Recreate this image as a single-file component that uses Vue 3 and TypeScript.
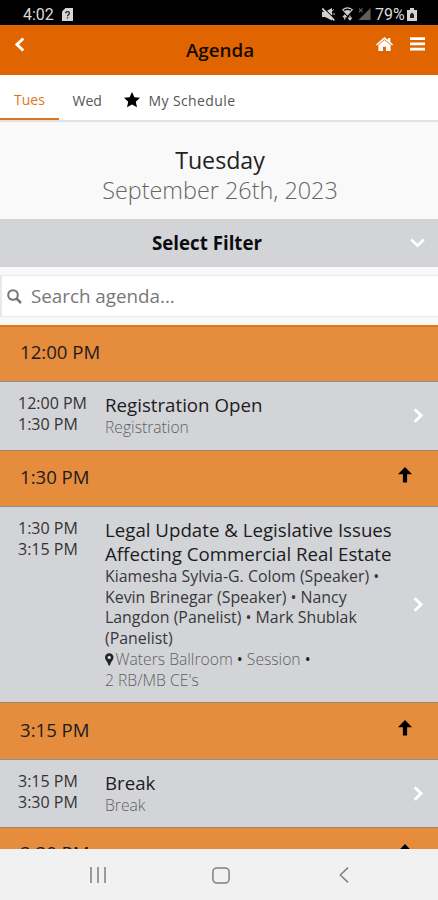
<script setup lang="ts">
interface Session {
  start: string
  end: string
  title: string[]
  speakers: string[]
  meta: string[]
  location?: string
  size: string
}

interface Slot {
  time: string
  jump: boolean
  size: string
  session?: Session
}

const slots: Slot[] = [
  {
    time: '12:00 PM',
    jump: false,
    size: 'bar-first',
    session: {
      start: '12:00 PM',
      end: '1:30 PM',
      title: ['Registration Open'],
      speakers: [],
      meta: ['Registration'],
      size: 'row-registration',
    },
  },
  {
    time: '1:30 PM',
    jump: true,
    size: 'bar-second',
    session: {
      start: '1:30 PM',
      end: '3:15 PM',
      title: ['Legal Update & Legislative Issues', 'Affecting Commercial Real Estate'],
      speakers: [
        'Kiamesha Sylvia-G. Colom (Speaker) •',
        'Kevin Brinegar (Speaker) • Nancy',
        'Langdon (Panelist) • Mark Shublak',
        '(Panelist)',
      ],
      location: 'Waters Ballroom',
      meta: ["2 RB/MB CE's"],
      size: 'row-legal',
    },
  },
  {
    time: '3:15 PM',
    jump: true,
    size: 'bar-third',
    session: {
      start: '3:15 PM',
      end: '3:30 PM',
      title: ['Break'],
      speakers: [],
      meta: ['Break'],
      size: 'row-break',
    },
  },
  { time: '3:30 PM', jump: true, size: 'bar-last' },
]
</script>

<template>
  <div class="phone">
    <div class="status">
      <span class="clock">4:02</span>
      <svg class="sim" viewBox="0 0 11 13"><path d="M3.5 0H11V13H0V3.5Z" fill="#d6d6d6" /><path d="M3.6 5.2C3.6 3 7.4 3 7.4 5.2C7.4 6.7 5.5 6.6 5.5 8.3M5.5 9.3V10.6" fill="none" stroke="#222" stroke-width="1.3" /></svg>
      <span class="grow"></span>
      <svg class="mute" viewBox="0 0 13 13"><path d="M0 3.8H3L10 0V12.5L3 9H0Z" fill="#cfcfcf" /><path d="M1.4 0L13 11.4" stroke="#000" stroke-width="1.2" /><path d="M.3 .5L12.3 12.3" stroke="#d8d8d8" stroke-width="1.7" /><path d="M10.5 6H13M10 3L12 1.5" stroke="#bbb" /></svg>
      <svg class="wifi" viewBox="0 0 12 14"><path d="M.7 2.2Q6-1.5 11.3 2.2L6 8Z" fill="none" stroke="#cfcfcf" stroke-width="1.2" /><path d="M2.6 3.8Q6 1.5 9.4 3.8L6 8Z" fill="#cfcfcf" /><path d="M3 13V8.5M1 10.5L3 8.3L5 10.5M8.7 8.5V13M6.7 11L8.7 13.2L10.7 11" fill="none" stroke="#cfcfcf" stroke-width="1.4" /></svg>
      <svg class="signal" viewBox="0 0 14 14"><path d="M13.5 .5V13.5H.5Z" fill="#5d5d5d" /><path d="M1 1L5 5M5 1L1 5" stroke="#666" stroke-width="1.1" /></svg>
      <span class="percent">79%</span>
      <svg class="battery" viewBox="0 0 10 13"><path d="M3 0H7V2H10V13H0V2H3Z" fill="#d4d4d4" /><path d="M3 10V6.5L5 4.5L7 6.5V10Z" fill="#222" /></svg>
    </div>

    <header class="header">
      <svg class="back" viewBox="0 0 11 15"><path d="M9.3 1.5L3 7.5L9.3 13.5" fill="none" stroke="#fff" stroke-width="3" /></svg>
      <h1 class="title">Agenda</h1>
      <svg class="home" viewBox="0 0 17 14"><path d="M8.5 0L12 3V1H14.3V5L17 7.4L16 8.6L8.5 2.2L1 8.6L0 7.4Z" fill="#fff" /><path d="M8.5 3L14.6 8.2V14H10V9.8H7V14H2.4V8.2Z" fill="#fff" /></svg>
      <svg class="menu" viewBox="0 0 15 14"><path d="M0 .2H15V3H0ZM0 5.5H15V8.3H0ZM0 10.8H15V13.6H0Z" fill="#fff" /></svg>
    </header>

    <nav class="tabs">
      <a class="tab active">Tues</a>
      <a class="tab wed">Wed</a>
      <a class="tab mine">
        <svg class="star" viewBox="0 0 24 24"><path d="M12 0L15.6 7.9L24 8.8L17.7 14.5L19.5 23L12 18.7L4.5 23L6.3 14.5L0 8.8L8.4 7.9Z" /></svg>
        <span>My Schedule</span>
      </a>
    </nav>

    <section class="date">
      <div class="day">Tuesday</div>
      <div class="full">September 26th, 2023</div>
    </section>

    <div class="filter">
      <span class="filter-label">Select Filter</span>
      <svg class="down" viewBox="0 0 15 10"><path d="M1.2 1.5L7.5 7.7L13.8 1.5" fill="none" stroke="#fff" stroke-width="2.7" /></svg>
    </div>

    <div class="search-area">
      <div class="search">
        <svg class="glass" viewBox="0 0 15 15"><circle cx="6" cy="6" r="4.8" fill="none" stroke="#777" stroke-width="2.1" /><path d="M9.5 9.5L14 14" stroke="#777" stroke-width="2.5" /></svg>
        <span class="placeholder">Search agenda...</span>
      </div>
    </div>

    <main class="list">
      <template v-for="slot in slots" :key="slot.time">
        <div class="bar" :class="slot.size">
          <span class="bar-time">{{ slot.time }}</span>
          <svg v-if="slot.jump" class="up" viewBox="0 0 14 16"><path d="M7 0L14 7.2H9.1V15.5H4.9V7.2H0Z" /></svg>
        </div>
        <div v-if="slot.session" class="row" :class="slot.session.size">
          <div class="times">
            <div>{{ slot.session.start }}</div>
            <div>{{ slot.session.end }}</div>
          </div>
          <div class="body">
            <div v-for="line in slot.session.title" :key="line" class="name">{{ line }}</div>
            <div v-for="line in slot.session.speakers" :key="line" class="speaker">{{ line }}</div>
            <div v-if="slot.session.location" class="meta place">
              <svg class="pin" viewBox="0 0 9 13"><path fill-rule="evenodd" d="M4.5 0A4.4 4.4 0 0 1 9 4.4C9 7 6 9 5.4 12.2Q4.5 13.6 3.6 12.2C3 9 0 7 0 4.4A4.4 4.4 0 0 1 4.5 0ZM4.5 2.6A1.8 1.8 0 1 0 4.5 6.2A1.8 1.8 0 1 0 4.5 2.6Z" fill="#222" /></svg>
              <span>{{ slot.session.location }} <b>•</b> Session <b>•</b></span>
            </div>
            <div v-for="line in slot.session.meta" :key="line" class="meta">{{ line }}</div>
          </div>
          <svg class="next" viewBox="0 0 11 15"><path d="M1.7 1.3L8 7.5L1.7 13.7" fill="none" stroke="#fff" stroke-width="2.9" /></svg>
        </div>
      </template>
    </main>

    <footer class="softkeys">
      <svg class="recents" viewBox="0 0 16 16"><path d="M1 0V16M8 0V16M15 0V16" stroke="#858585" stroke-width="1.6" /></svg>
      <svg class="homekey" viewBox="0 0 18 17"><rect x=".9" y=".9" width="16.2" height="15.2" rx="4" fill="none" stroke="#808080" stroke-width="1.5" /></svg>
      <svg class="backkey" viewBox="0 0 10 16"><path d="M9 .6L1.3 8L9 15.4" fill="none" stroke="#808080" stroke-width="1.5" /></svg>
    </footer>
  </div>
</template>

<style>
body {
  margin: 0;
}
</style>

<style scoped>
.phone {
  width: 438px;
  height: 900px;
  overflow: hidden;
  display: flex;
  flex-direction: column;
  background: #f9f9f9;
  font-family: 'Open Sans', 'Noto Sans', sans-serif;
  color: #1c1c1e;
  white-space: nowrap;
}
.phone svg {
  flex: none;
  display: block;
}
.phone > * {
  flex: none;
  box-sizing: border-box;
}
.status {
  height: 25px;
  background: #000;
  color: #dadada;
  display: flex;
  align-items: center;
  padding: 3px 21px 0 23px;
  font-family: Roboto, sans-serif;
}
.clock {
  font-size: 16px;
  width: 39px;
}
.sim {
  width: 11px;
  height: 13px;
}
.grow {
  flex: 1;
}
.mute {
  width: 13px;
  height: 13px;
  margin-right: 7px;
}
.wifi {
  width: 11px;
  height: 14px;
  margin-right: 5px;
}
.signal {
  width: 13px;
  height: 14px;
  margin-right: 4px;
}
.percent {
  font-size: 16px;
  width: 32px;
}
.battery {
  width: 10px;
  height: 13px;
}
.header {
  height: 50px;
  background: #e06500;
  display: flex;
  align-items: flex-start;
  padding: 12px 12px 0 14px;
}
.back {
  width: 11px;
  height: 15px;
}
.title {
  margin: 0;
  flex: 1;
  padding-left: 39px;
  text-align: center;
  font-size: 18.8px;
  line-height: 26px;
  font-weight: 600;
  color: #150a00;
}
.home {
  width: 17px;
  height: 14px;
  margin-right: 17px;
}
.menu {
  width: 15px;
  height: 14px;
  margin-right: 1px;
}
.tabs {
  height: 47px;
  background: #fff;
  border-bottom: 2px solid #e2e2e2;
  display: flex;
  font-size: 14px;
  line-height: 20px;
  color: #555;
}
.tab {
  height: 45px;
  box-sizing: border-box;
  padding-top: 16px;
}
.active {
  width: 58.5px;
  padding-left: 14px;
  padding-top: 15px;
  color: #dd741f;
  border-bottom: 2px solid #dd741f;
}
.wed {
  padding-left: 14px;
  width: 65px;
}
.mine {
  display: flex;
  gap: 9px;
  letter-spacing: 0.4px;
}
.star {
  width: 16px;
  height: 16px;
  margin-top: 1px;
}
.date {
  height: 97px;
  padding-top: 23px;
  text-align: center;
  line-height: 30px;
}
.day {
  font-size: 23.2px;
  padding-left: 2px;
  color: #222;
}
.full {
  font-size: 23.4px;
  padding-left: 2px;
  font-weight: 300;
  color: #666;
}
.filter {
  height: 48px;
  background: #d3d4d8;
  display: flex;
  align-items: center;
  padding: 0 13px 0 4px;
}
.filter-label {
  flex: 1;
  text-align: center;
  font-size: 18.7px;
  line-height: 24px;
  font-weight: 700;
  color: #0c0c0e;
}
.down {
  width: 15px;
  height: 10px;
}
.search-area {
  height: 58px;
  padding-top: 8px;
}
.search {
  height: 42px;
  box-sizing: border-box;
  background: #fff;
  border: 1px solid #e9e9ea;
  border-right: 0;
  border-left-width: 2px;
  display: flex;
  align-items: center;
  padding-left: 5px;
}
.glass {
  width: 15px;
  height: 15px;
}
.placeholder {
  padding-left: 9px;
  font-size: 18.8px;
  color: #777;
}
.list {
  height: 524px;
  overflow: hidden;
}
.bar {
  box-sizing: border-box;
  background: #e68c3d;
  border-top: 1px solid #9f846f;
  display: flex;
  justify-content: space-between;
  padding: 13px 26px 0 20px;
}
.bar-first {
  height: 56px;
  padding-top: 12px;
  border-top: 2px solid #de7b17;
}
.bar-second {
  height: 56px;
}
.bar-third {
  height: 57px;
  padding-top: 14px;
}
.bar-last {
  height: 56px;
  padding-top: 12px;
}
.bar-time {
  font-size: 18.6px;
  line-height: 25px;
}
.up {
  width: 14px;
  height: 16px;
  margin-top: 3px;
}
.bar-last .up {
  margin-top: 4px;
}
.row {
  box-sizing: border-box;
  background: #d3d4d8;
  border-top: 1px solid #8e8f98;
  display: flex;
  padding: 11px 14px 0 18px;
}
.row-registration {
  height: 69px;
}
.row-legal {
  height: 196px;
}
.row-break {
  height: 68px;
}
.times {
  width: 87px;
  font-size: 16px;
  line-height: 20.5px;
  color: #333;
}
.body {
  flex: 1;
}
.name {
  font-size: 18.7px;
  line-height: 24px;
}
.speaker {
  font-size: 15.9px;
  line-height: 20.7px;
  color: #38383a;
}
.meta {
  font-size: 15.7px;
  line-height: 20.7px;
  font-weight: 300;
  color: #5f5f62;
}
.meta b {
  font-weight: 400;
  color: #222;
}
.place {
  display: flex;
  align-items: center;
  gap: 2px;
}
.pin {
  width: 8.5px;
  height: 13px;
}
.next {
  width: 11px;
  height: 15px;
  align-self: center;
  margin-top: -12px;
}
.softkeys {
  height: 51px;
  background: #f1f1f1;
  display: flex;
  align-items: center;
  padding: 1px 0 0 90px;
}
.recents {
  width: 16px;
  height: 16px;
}
.homekey {
  width: 18px;
  height: 17px;
  margin-left: 106px;
}
.backkey {
  width: 10px;
  height: 16px;
  margin-left: 109px;
}
</style>
